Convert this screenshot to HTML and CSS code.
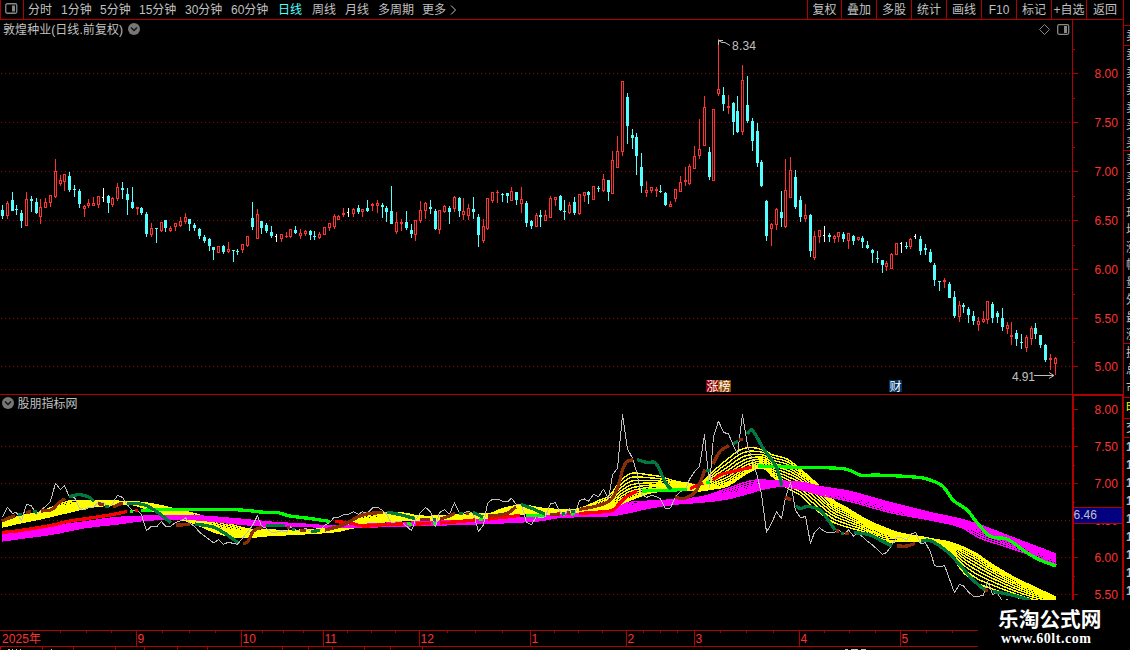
FILE: index.html
```html
<!DOCTYPE html>
<html lang="zh-CN">
<head>
<meta charset="utf-8">
<title>敦煌种业</title>
<link rel="stylesheet" href="styles.css">
</head>
<body>
<div class="app">
  <header class="toolbar">
    <div class="layout-btn"><svg width="13" height="11" viewBox="0 0 13 11"><rect x=".75" y=".75" width="11" height="9.5" rx="1.5" class="icon-line"/><rect x="7" y="2.5" width="3" height="6" class="icon-fill"/></svg></div>
    <nav class="periods">
      <span class="p2">分时</span><span class="p3">1分钟</span><span class="p3b">5分钟</span><span class="p4">15分钟</span><span class="p4">30分钟</span><span class="p4b">60分钟</span><span class="p2b active">日线</span><span class="p2c">周线</span><span class="p2c">月线</span><span class="p5">多周期</span><span class="more">更多<svg width="7" height="10" viewBox="0 0 7 10"><path d="M1 .5 5.5 5 1 9.5" class="chev"/></svg></span>
    </nav>
    <nav class="actions"><span class="first">复权</span><span>叠加</span><span>多股</span><span>统计</span><span>画线</span><span>F10</span><span>标记</span><span>+自选</span><span>返回</span></nav>
  </header>
  <main class="workspace">
    <section class="charts">
      <svg class="price" width="1124" height="375" viewBox="0 20 1124 375">
        <g id="priceGrid"></g>
        <path class="frame" d="M1072.5 20V395M0 394.5H1124M1123.5 20V395"/>
        <g id="candles" class="crisp"></g>
        <text x="3" y="34" class="txt" textLength="120">敦煌种业(日线.前复权)</text>
        <circle cx="134" cy="29" r="6" class="dot"/><path d="M131 27.5 134 30.5 137 27.5" class="dot-chev"/>
        <path d="M1044.5 24.5 1049.5 29.5 1044.5 34.5 1039.5 29.5Z" class="diamond"/>
        <rect x="1057.7" y="24.7" width="11" height="9.6" rx="1.5" class="icon-line"/><rect x="1064" y="26" width="3" height="7" class="icon-fill"/>
        <path class="arrow" d="M718.5 45V40.5H723M718.5 40.5 722 42.5H725L730 45.5"/>
        <text x="732" y="50" class="txt" textLength="24">8.34</text>
        <text x="1012" y="381" class="txt" textLength="23">4.91</text>
        <path class="arrow" d="M1034 375.5H1054M1049 372.5 1054 375.5 1049 378.5"/>
        <rect x="706" y="380" width="12" height="12" fill="#900000"/><rect x="718" y="380" width="13" height="12" fill="#904800"/>
        <rect x="889" y="380" width="13" height="12" fill="#003366"/>
        <text x="706.5" y="390.5" class="tag">涨</text><text x="718.5" y="390.5" class="tag">榜</text><text x="889.5" y="390.5" class="tag">财</text>
      </svg>
      <svg class="indicator" width="1124" height="205" viewBox="0 395 1124 205">
        <g id="indGrid"></g>
        <g id="bands" class="crisp"></g>
        <g id="lines" class="crisp"></g>
        <path class="frame thick" d="M1073 395V600M1123 395V600"/><path class="frame" d="M1073 395.5H1124"/>
        <rect x="1074" y="507.500" width="48" height="15.500" class="cursor"/>
        <path class="frame" d="M1074 507.500H1122M1074 523.500H1122"/>
        <text x="1073.500" y="519" class="txt">6.46</text>
        <circle cx="8" cy="403" r="6" class="dot"/><path d="M5 401.500 8 404.500 11 401.500" class="dot-chev"/>
        <text x="17.500" y="408" class="txt" textLength="60">股朋指标网</text>
      </svg>
      <svg class="timeline" width="1124" height="50" viewBox="0 600 1124 50">
        <path class="frame" d="M0 630.500H978M0 646.500H978"/>
        <path class="footer-marks" d="M8 649.500H10M12 649.500H13M16 649.500H17M20 649.500H21M51 649.500H52M845 649.500H848M851 649.500H858M861 649.500H866"/>
        <g id="months"></g>
      </svg>
    </section>
    <aside class="quotes">
      <div class="quote-top"></div>
      <div class="quote-list" id="quoteList"></div>
      <div class="quote-head">明</div>
      <div class="quote-sub">交</div>
      <div class="trade-list" id="tradeList"></div>
    </aside>
  </main>
  <div class="watermark"><div class="site">乐淘公式网</div><div class="url">www.60lt.com</div></div>
</div>
<script src="chart.js"></script>
</body>
</html>
```
FILE: styles.css
```css
* { box-sizing: border-box; }
body { margin: 0; background: #000; overflow: hidden; }
.app { position: relative; width: 1130px; height: 650px; background: #000; overflow: hidden; color: #c0c0c0; font: 12px/18px "Liberation Sans", "Noto Sans CJK SC", sans-serif; }
.toolbar { display: flex; height: 20px; width: 1124px; border-bottom: 1px solid #b00000; border-right: 1px solid #b00000; }
.layout-btn { width: 24px; height: 19px; padding: 3px 0 0 4px; border-left: 1px solid #b00000; border-right: 1px solid #b00000; }
.layout-btn svg { display: block; }
.icon-line { fill: none; stroke: #888; stroke-width: 1.3; }
.icon-fill { fill: #888; }
.periods { display: flex; flex: 1; padding: 1px 0 0 4px; white-space: nowrap; }
.p2 { width: 33px; }
.p3 { width: 39px; }
.p3b { width: 39px; }
.p4, .p4b { width: 46px; }
.p4b { width: 47px; }
.p2b { width: 34px; }
.p2c { width: 33px; }
.p5 { width: 44px; }
.active { color: #54ffff; }
.more svg { margin-left: 4px; vertical-align: -1px; }
.chev { fill: none; stroke: #c0c0c0; }
.actions { display: flex; }
.actions span { width: 35px; height: 19px; padding-top: 1px; border-left: 1px solid #b00000; text-align: center; white-space: nowrap; }
.actions .first { width: 34px; }
.actions span:last-child { width: 37px; }
.workspace { display: flex; height: 630px; }
.charts { width: 1124px; flex: none; }
.charts > svg { display: block; }
.frame { fill: none; stroke: #b00000; shape-rendering: crispEdges; }
.thick { stroke-width: 2; }
.grid { stroke: #a00000; stroke-dasharray: 1 3; shape-rendering: crispEdges; }
.txt { fill: #c0c0c0; }
.tag { fill: #fff; font-size: 12px; }
.axis { fill: #ff3232; }
.crisp { shape-rendering: crispEdges; }
.dot { fill: #777; }
.dot-chev { fill: none; stroke: #111; stroke-width: 1.4; }
.diamond { fill: none; stroke: #888; }
.arrow { fill: none; stroke: #c0c0c0; }
.cursor { fill: #000080; }
.footer-marks { stroke: #c0c0c0; }
.line { fill: none; stroke-linejoin: round; }
.quotes { width: 6px; height: 630px; overflow: hidden; display: flex; flex-direction: column; }
.quotes div { flex: none; padding-left: 2px; overflow: hidden; white-space: nowrap; }
.quotes .quote-top { height: 6px; border-bottom: 1px solid #b00000; }
.quotes .quote-list { height: 372px; border-bottom: 1px solid #b00000; padding: 0; }
.quote-list div { height: 17.500px; line-height: 18px; }
.quote-list .ruled { border-bottom: 1px solid #b00000; }
.quote-list .ruled:first-child { height: 20px; line-height: 20px; }
.quotes .quote-head { height: 21px; color: #ffff00; border-bottom: 1px solid #b00000; line-height: 20px; }
.quotes .quote-sub { height: 19px; border-bottom: 1px solid #b00000; }
.quotes .trade-list { padding: 0; height: 162px; }
.trade-list div { height: 18px; font-weight: bold; }
.watermark { position: absolute; left: 978px; top: 600px; width: 152px; height: 50px; background: #000; color: #fff; padding: 8px 0 0 20px; }
.site { font: bold 20.700px/21px "Noto Sans CJK SC", sans-serif; white-space: nowrap; }
.url { font: bold 14px/16px "Liberation Serif", serif; padding: 2px 0 0 3px; letter-spacing: .55px; }
```
FILE: chart.js
```js
const NS = 'http://www.w3.org/2000/svg';
function add(parent, tag, attrs, text) {
  const el = document.createElementNS(NS, tag);
  for (const k in attrs) el.setAttribute(k, attrs[k]);
  if (text) el.textContent = text;
  document.getElementById(parent).appendChild(el);
}

// Each group: origin, then "kind x high bodyTop bodyBottom low" in thirds of a pixel.
const groups = [
  [0, 140, `c 7 195 210 228 237;r 22 183 189 228 237;c 37 156 180 213 213;c 49 195 207 210 225;c 64 210 219 243 264;r 79 156 177 258 258;c 94 168 177 183 216;c 109 174 186 219 222;r 121 177 201 231 252;r 136 174 186 204 204;r 151 165 165 189 201;r 166 57 93 171 174;r 181 105 120 132 138;r 193 102 102 126 153;c 208 96 108 150 156;c 223 135 147 150 171;c 238 147 153 192 204;r 253 195 198 207 231;r 265 177 189 198 204;r 280 171 189 198 198;r 295 168 168 195 204;w 310 144 171 174 186;c 325 165 168 189 219;r 337 171 174 195 201;r 352 129 141 177 183;c 367 126 144 150 177;c 382 144 162 180 225;c 397 141 186 204 207;r 412 201 201 207 225;c 424 201 204 219 225;c 439 216 222 282 291;r 454 249 264 285 291;c 469 264 264 267 309;r 484 246 246 273 276;c 496 240 240 264 276;r 511 258 264 273 276;r 526 249 249 261 273;r 541 231 243 258 261;r 556 219 231 246 252;c 568 237 237 252 273;c 583 249 255 264 273;c 598 264 267 288 297;c 613 285 291 303 309;c 628 294 297 318 333;c 640 321 321 330 360;r 655 318 318 339 339;c 670 315 318 336 342;r 685 306 327 336 339;c 700 330 330 333 366;c 712 327 333 336 345;r 727 312 312 330 339;r 742 288 288 318 321;c 757 186 234 261 270;r 772 207 222 297 297;c 784 243 243 264 282;c 799 249 255 273 279`],
  [270, 140, `c 4 258 276 288 294;w 19 282 288 291 306;r 34 282 282 297 306;r 49 276 288 291 294;r 61 267 267 291 294;c 76 258 270 279 282;r 91 267 279 288 297;r 106 270 273 282 288;c 121 270 273 285 300;c 133 273 288 291 300;r 148 276 282 294 297;r 163 261 261 285 285;r 178 249 249 264 273;r 193 222 228 261 267;r 205 225 228 240 240;r 220 204 219 225 231;w 235 204 216 219 231;r 250 204 207 222 231;c 265 195 204 216 222;r 277 207 207 216 231;c 292 180 204 213 216;r 307 189 192 198 213;r 322 180 189 198 219;c 337 189 195 201 234;c 349 198 204 216 246;c 364 138 213 252 252;r 379 216 246 276 282;r 394 237 246 252 273;c 409 213 246 264 270;c 424 252 270 282 294;r 436 240 240 285 303;r 451 183 210 243 249;r 466 186 189 213 237;c 481 180 201 207 222;c 496 207 213 267 270;r 508 210 210 270 282;r 523 195 198 216 219;c 538 198 204 216 252;r 553 168 171 207 216;c 568 171 174 213 231;r 580 174 213 225 240;r 595 192 204 228 240;c 610 171 207 216 237;c 625 222 231 285 321;r 640 237 258 303 309;r 652 174 174 267 270;r 667 156 156 183 189;r 682 150 156 159 189;c 697 159 162 165 186;c 712 159 159 168 189;r 724 141 153 183 183;c 739 156 156 180 195;r 754 141 177 192 219;c 769 183 189 249 261`],
  [530, 60, `c 4 480 483 498 507;r 19 459 465 501 501;c 31 450 465 471 501;r 46 450 465 483 483;r 61 408 414 474 474;r 76 411 411 420 438;c 91 405 408 450 453;c 103 420 453 456 480;r 118 426 435 459 462;c 133 411 426 459 465;r 148 402 402 462 465;r 163 396 396 408 426;c 175 393 396 405 432;r 190 378 378 420 420;c 205 378 384 387 396;r 220 342 357 393 396;c 235 360 360 396 423;r 247 273 300 402 402;r 262 228 273 324 324;r 277 63 63 276 288;c 292 99 111 198 252;c 307 207 225 234 267;c 319 219 231 288 345;c 334 279 321 378 399;r 349 363 390 399 411;r 364 381 381 393 399;r 379 381 387 393 411;c 391 375 393 396 399;c 406 396 399 435 438;r 421 423 432 441 441;r 436 387 387 417 426;r 451 348 366 396 396;r 466 321 360 366 378;r 478 312 318 372 375;r 493 258 288 327 327;r 508 177 267 288 297;r 523 108 141 258 258;c 538 261 276 351 360;r 550 147 147 363 363;r 565 -63 87 102 108;c 580 81 105 132 153;r 595 105 138 144 162;c 610 126 129 186 225;c 622 108 153 216 219;r 637 15 60 216 225;c 652 48 135 183 189;c 667 174 183 243 273;c 682 189 213 309 321;c 694 300 306 378 381;c 709 420 423 528 543;r 724 489 492 507 558;r 739 444 447 495 510;c 754 393 456 474 501;r 766 297 390 501 504;r 781 291 330 414 414;c 796 330 351 441 447`],
  [780, 150, `c 61 138 150 201 216;r 76 162 195 207 216;c 91 192 195 303 321;r 103 243 258 324 330;r 118 240 240 261 279;w 133 228 255 258 276;c 148 249 255 261 276;r 163 255 258 267 279;r 175 246 246 261 276;c 190 246 252 267 276;r 205 249 249 273 297;c 220 255 258 273 285;r 235 261 261 270 273;c 247 258 264 276 294;c 262 273 285 294 297;c 277 297 300 309 339;c 292 303 324 327 339;c 307 330 330 345 369;r 319 333 339 351 363;r 334 309 312 357 357;r 349 279 279 315 315;w 364 276 279 282 309;c 379 276 288 291 297;r 391 264 267 291 297;w 406 252 258 261 267;c 421 258 267 303 315;c 436 282 294 300 315;c 451 297 306 336 339;c 463 339 345 390 408;c 478 393 393 396 423;r 493 384 390 396 414;c 508 396 402 444 444;c 523 423 441 498 504;r 538 453 465 501 516;c 550 459 465 471 489;c 565 471 477 495 519;c 580 483 498 513 525;r 595 501 513 525 543;r 610 483 507 516 519;r 622 453 453 510 522;c 637 456 462 504 519;c 652 483 489 501 519;c 667 474 504 531 543;r 682 516 525 537 552;r 694 516 555 561 585;c 709 540 549 567 588;c 724 552 576 579 597;r 739 555 561 594 606;r 754 528 534 567 585;c 766 519 534 552 567;c 781 555 555 585 594;c 796 582 585 630 636;r 811 612 624 630 660;r 826 621 624 642 675`]
];
const colors = { c: '#54ffff', r: '#ff3232', w: '#ffffff' };
const closes = [];
for (const [ox, oy, rows] of groups) {
  for (const row of rows.split(';')) {
    const [kind, ...v] = row.split(' ');
    const x = ox + Math.floor(v[0] / 3);
    const [hi, top, bot, lo] = v.slice(1).map(n => oy + Math.round(n / 3));
    const fill = colors[kind];
    const box = (bx, by, w, h) => { if (h > 0) add('candles', 'rect', { x: bx, y: by, width: w, height: h, fill }); };
    if (kind === 'r' && bot - top > 2) {
      box(x, hi, 1, top - hi);
      box(x, bot, 1, lo - bot);
      box(x - 1, top, 3, 1);
      box(x - 1, bot - 1, 3, 1);
      box(x - 1, top, 1, bot - top);
      box(x + 1, top, 1, bot - top);
    } else {
      box(x, hi, 1, lo - hi);
      box(x - 1, top, kind === 'w' ? 2 : 3, bot - top);
    }
    const close = kind === 'c' ? bot : top;
    closes.push([x + 0.5, 409 + (close - 73) * 0.756]);
  }
}

function axis(parent, marks, minor, labelDy) {
  marks.forEach(([y, label, noGrid]) => {
    if (!noGrid) add(parent, 'line', { x1: 1, x2: 1072, y1: y + 0.5, y2: y + 0.5, class: 'grid' });
    add(parent, 'path', { d: `M1073 ${y + 0.5}H1078`, class: 'frame' });
    add(parent, 'text', { x: 1094.5, y: y + labelDy, class: 'axis' }, label);
  });
  minor.forEach(y => add(parent, 'path', { d: `M1073 ${y + 0.5}H1075`, class: 'frame' }));
}
axis('priceGrid', [[73, '8.00'], [122, '7.50'], [171, '7.00'], [220, '6.50'], [269, '6.00'], [318, '5.50'], [366, '5.00']], [49, 98, 147, 196, 245, 294, 342], 5);
axis('indGrid', [[409, '8.00', true], [446, '7.50'], [483, '7.00'], [520, '6.50'], [557, '6.00'], [594, '5.50']], [428, 465, 502, 539, 576], 5);

// Moving-average ribbons: x, upper edge, lower edge.
const yellow = '2 523 527;20 516 523;40 512 519;57 505 515;70 501 512;93 501 507;130 501.5 504.5;150 503.5 510;167 507 516;190 512.5 522;217 520 533;240 527 537.5;255 530 537;270 530 535.5;293 530.5 534.5;337 526.5 531.5;353 519 528;370 513 525;387 512.5 521.5;403 513 520.5;420 516 520.5;450 515.5 520.5;470 514 519;490 513.5 519;503 508.5 516.5;518 505.5 514.5;530 506 513.5;540 508 514;560 509.5 513.5;577 509 512.5;600 500 511.5;610 495 509;620 481.5 505;627 475.5 501.5;633 473 499;650 475 493;660 476.5 491.5;677 481.5 490;687 483 490;697 485 491;703 481.5 490.5;713 471.5 489;727 459.5 486;740 450 478;750 447.5 471.5;763 450 468;773 455 477;787 459 488;800 469 495;813 480 507;820 487 513;833 500 522;847 508 527;867 520 533;883 527 541.5;900 533 541.5;917 536 541;933 539 542.5;947 541.5 550;963 547 572;977 554 583;990 563 588;1010 575 595;1030 585 601;1056 597 605';
const magenta = '2 535 541;20 532 538.5;53 526 534;83 522 528;117 517.5 524;150 516 520;190 515.5 519.5;233 518.5 523.5;270 522 526.5;303 524 526.5;337 526 527.5;370 524 527;403 522.5 526;470 520 524;537 517 521;560 514.5 517.5;613 510 515.5;627 503 513;650 501 508;677 499.5 504;703 496.5 502;727 488.5 499;750 481 493;760 480 490;780 481 486.5;800 482 489.5;820 486.5 495;850 491.5 501.5;890 502.5 512.5;930 512.5 520;960 519 527;980 525 538;1010 536.5 548;1035 546 556.5;1056 554 564';
const parse = s => s.split(';').map(p => p.trim().split(' ').map(Number));
function ease(points) {
  const out = [];
  for (let i = 0; i < points.length - 1; i++) {
    const a = points[Math.max(0, i - 1)], b = points[i], c = points[i + 1], d = points[Math.min(points.length - 1, i + 2)];
    const w = c[0] - b[0];
    for (let x = b[0]; x < c[0]; x += 2) {
      const t = (x - b[0]) / w, row = [x];
      for (let k = 1; k < b.length; k++) {
        const m0 = (c[k] - a[k]) / (c[0] - a[0]) * w, m1 = (d[k] - b[k]) / (d[0] - b[0]) * w;
        row.push((2 * t ** 3 - 3 * t * t + 1) * b[k] + (t ** 3 - 2 * t * t + t) * m0 + (3 * t * t - 2 * t ** 3) * c[k] + (t ** 3 - t * t) * m1);
      }
      out.push(row);
    }
  }
  out.push(points[points.length - 1]);
  return out;
}
function poly(parent, pts, color, width) {
  add(parent, 'polyline', { points: pts.map(p => p[0] + ',' + p[1].toFixed(1)).join(' '), stroke: color, 'stroke-width': width, class: 'line' });
}
function ribbon(data, color, count) {
  const env = ease(parse(data));
  for (let k = 0; k < count; k++) {
    const t = k / (count - 1);
    poly('bands', env.map(([x, u, l]) => {
      const late = Math.min(1, Math.max(0, (x - 755) / 60));
      const f = (1 - Math.pow(1 - t, 1.6)) * (1 - late) + Math.pow(t, 1.6) * late;
      return [x, u + (l - u) * f];
    }), color, 1.4);
  }
}
ribbon(yellow, '#ffff00', 11);
ribbon(magenta, '#ff00ff', 10);
poly('lines', closes, '#c0c0c0', 1);

// Trend segments, colour key followed by x y pairs.
const tint = { R: '#ff0000', L: '#00ff00', B: '#8b2e08', G: '#007840' };
const trends = `R 2 532.5 20 530.5 53 525 67 521.5 87 518.5 110 515 127 511.5|L 130 511.5 133 511.5|R 135 510.5 138 510.5|L 141 510.5 160 509.500 230 509.5 247 510.5 267 512.5 277 512.5 290 516 310 518.5 330 521.5|R 335 521.5 350 523 363 526 385 524.5 403 524|L 407 523.5 412 524.5|R 416 524 431 523.5|L 433 523.5 436 523.5|R 440 523 460 521.5 475 520|L 479 519.5 483 519.5|R 488 519 520 515.5|L 526 515.5 545 515.3|R 550 514.5 560 514|L 562 514 565 514|R 567 513.5 570 513.5|L 571 514 575 513.5|R 579 513.5 600 512 613 510 620 503 627 496.5 637 491|L 642 491 687 489.5|R 690 488.5 703 483|L 706 482.5 710 482.5|R 713 480 720 475 733 471.5 752 467|L 758 466 775 466.5 800 467.5 845 469 862 475.5 875 475 920 477.5 930 480 943 486.5 953 500 967 510 977 522.5 990 536 1008 539.5 1025 551.5 1040 560 1056 566|B 2 521 9 518 15 516|G 18 514.7 22 514.7|B 26 512.7 31 511.5|G 33 511.5 37 512|B 41 511 52 509.5 58 503.5 65 498.5|G 69 496.7 79 494.7 90 497.5 94 501.7|B 98 503.5 104 505|G 105 506.5 109 506.5|B 113 507 123 502.7|G 127 503.5 143 504.5 155 510.5 171 522.7|B 176 525 190 524.7|G 195 524 213 527 222 531.5 238 542.7|B 243 543.5 248 541.5 253 531.5 262 527|G 266 525.5 285 525.5|B 287 527.5 290 527.5|G 292 529.5 295 529.5|B 300 530.5 306 530.5|G 311 531.5 320 530.5|B 325 530 343 525 360 516 370 513.5 383 512.5|G 387 512.3 395 513.5 415 518.5|B 420 519.5 430 519.5|G 433 519.5 436 519.5|B 440 519 448 516.5 455 513.5|G 459 513.5 463 513.5|B 466 513.3 469 513.3|G 473 512.5 483 517|B 488 516 507 513.5 516 507|G 521 504.5 532 508.5 545 514.3|B 550 514.3 560 514.3|G 562 514 565 513.5|B 567 512.6 570 512.6|G 571 511.6 575 511.6|B 579 509.5 600 505 612 498.5 618 486.5 623 468.5 627 461.5 633 460|G 637 459.5 647 462.5 656 463.5 665 481.5 671 489.5|B 675 497 681 498.5 687 497.5 697 489.5 705 469.5|G 706 470.5 710 470.5|B 713 464 720 451.5 729 445.5|G 733 443.5 738 441.5|B 739 439.500 743 439.500|G 747 434 752 430 763 448 777 468.5 782 485.5|B 785 497 791 500|G 796 505.500 800 508.5 807 506.5 820 510 827 518.5 835 530|B 836 531 839 531|G 841 533.7 844 533.7|B 845 533.3 849 533.3|G 854 532.5 870 535 883 541.5 892 546|B 897 546 907 546 915 543.5|G 921 541 930 540.5 947 551.5 960 565 973 580 985 590|B 985 590.5 988 590.5|G 993 591.5 1012 595 1030 600`;
trends.split('|').forEach(s => {
  const [key, ...n] = s.trim().split(' ');
  const pts = [];
  for (let i = 0; i < n.length; i += 2) pts.push([+n[i], +n[i + 1]]);
  poly('lines', ease(pts), tint[key], 3.3);
});

[[136, '9'], [241, '10'], [323, '11'], [419, '12'], [530, '1'], [626, '2'], [694, '3'], [799, '4'], [900, '5']].forEach(([x, m]) => {
  add('months', 'path', { d: `M${x + 0.5} 630V646`, class: 'frame' });
  add('months', 'text', { x: x + 1.5, y: 643, class: 'axis' }, m);
});
add('months', 'text', { x: 2, y: 643, class: 'axis', textLength: 39 }, '2025年');
[60, 86, 111, 162, 189, 215, 262, 283, 303, 347, 371, 395, 447, 475, 502, 554, 578, 602, 643, 660, 677, 720, 746, 773, 824, 849, 875, 926, 952].forEach(x => add('months', 'path', { d: `M${x + 0.5} 631V633`, class: 'frame' }));
[0, 42, 73, 115, 144, 177, 207, 282, 308, 332, 364, 390, 422].forEach(x => add('months', 'path', { d: `M${x + 0.5} 647V650`, class: 'frame' }));

'卖卖卖卖卖买买买买买现均涨幅量外最涨换总市'.split('').forEach((ch, i) => {
  const row = document.createElement('div');
  row.textContent = ch;
  if (i === 0 || i === 6 || i === 17) row.className = 'ruled';
  document.getElementById('quoteList').appendChild(row);
});
for (let i = 0; i < 9; i++) {
  const row = document.createElement('div');
  row.textContent = '1';
  document.getElementById('tradeList').appendChild(row);
}
```
